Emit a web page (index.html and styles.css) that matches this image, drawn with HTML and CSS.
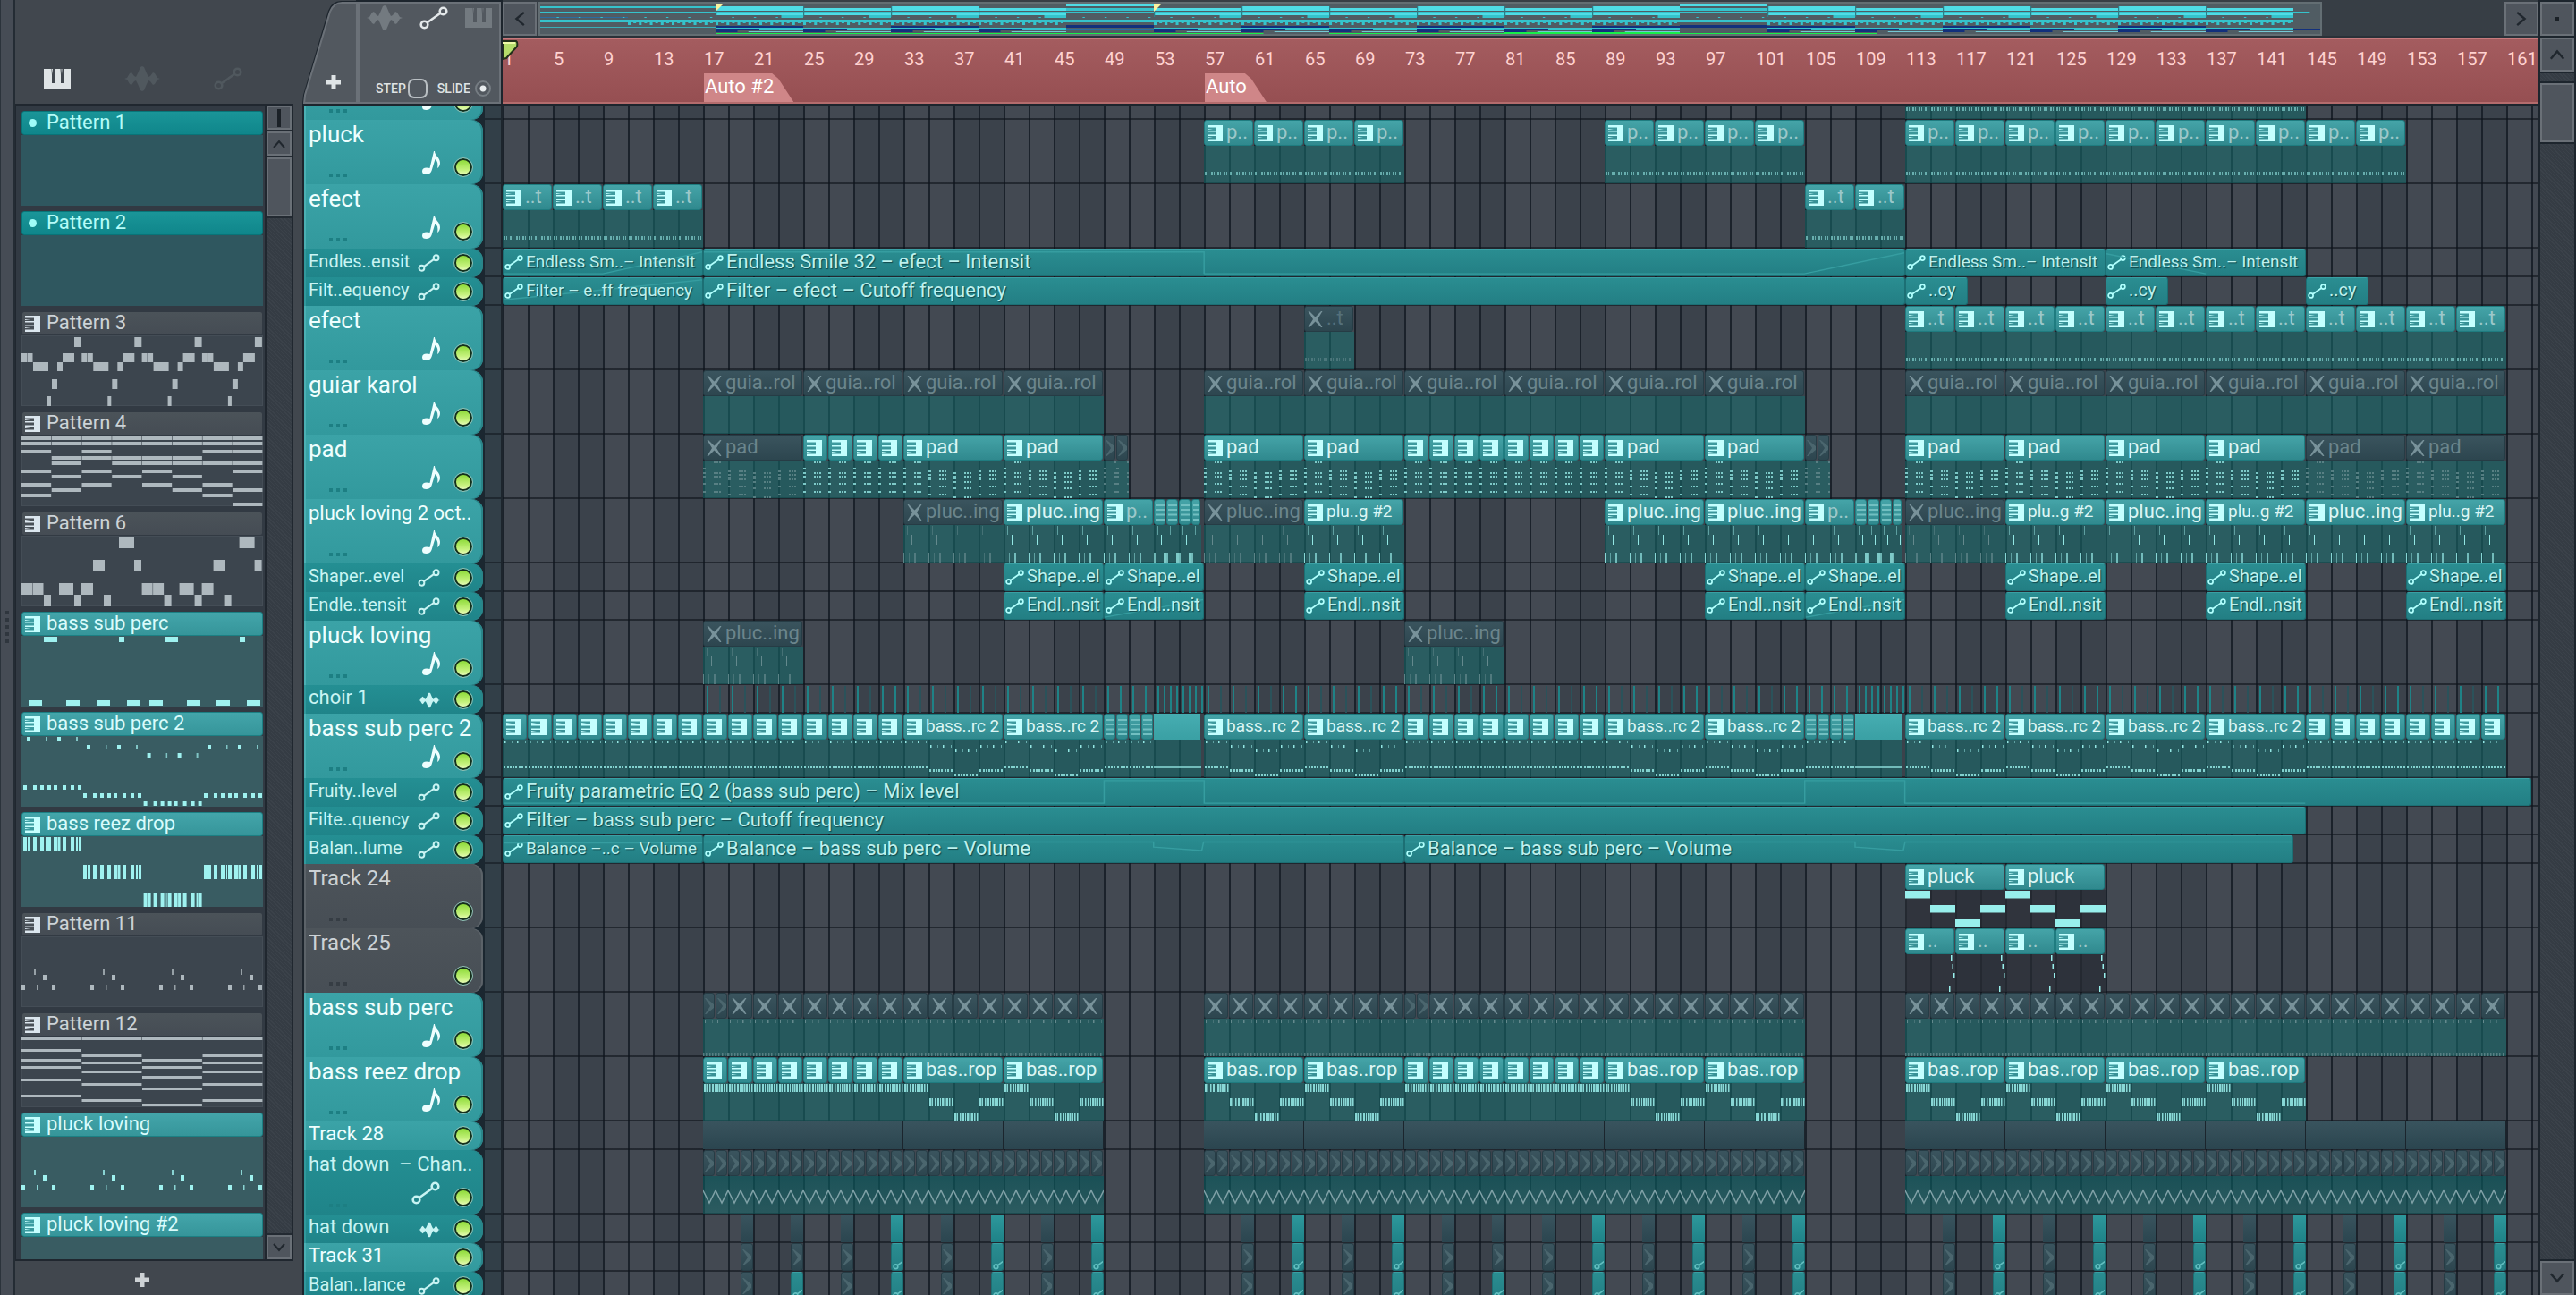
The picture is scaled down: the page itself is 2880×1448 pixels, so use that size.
FILE: index.html
```html
<!DOCTYPE html>
<html lang="en">
<head>
<meta charset="utf-8">
<title>Playlist</title>
<link rel="stylesheet" href="styles.css">
</head>
<body>
<svg class="symbols" aria-hidden="true">
  <symbol id="i-keys" viewBox="0 0 30 22"><path d="M0 0H8.500L9 7V16H13V0H18.500L19 7V16H23V0H30V22H0ZM9 0H10L9.500 6ZM19.500 0H20.500L20 6Z"/></symbol>
  <symbol id="i-pattern" viewBox="0 0 17 18"><path d="M0 0H17V18H0V15.500H10V12H0V10.500H10V7.500H0V6H10V2.500H0ZM0 4L6 5H0ZM0 14L6 13H0Z"/></symbol>
  <symbol id="i-wave" viewBox="0 0 40 28"><path d="M0 14L3 13L6 8L8 7L11 11L13 12L15 8L18 1L20 0L22 1L25 8L27 12L29 11L32 7L34 8L37 13L40 14L37 15L34 20L32 21L29 17L27 16L25 20L22 27L20 28L18 27L15 20L13 16L11 17L8 21L6 20L3 15Z"/></symbol>
  <symbol id="i-auto" viewBox="0 0 32 26"><g fill="none" stroke="currentColor" stroke-width="2.600"><circle cx="5.500" cy="20.500" r="3.800"/><circle cx="26.500" cy="5.500" r="3.800"/><path d="M9 18L23 8"/></g></symbol>
  <symbol id="i-x" viewBox="0 0 16 18"><path d="M0 0H1.500L8 6.500L14.500 0H16L10.500 9L16 18H14.500L8 11.500L1.500 18H0L5.500 9Z"/></symbol>
  <symbol id="i-half" viewBox="0 0 10 18"><path d="M0 0H1.500L10 7V11L1.500 18H0L6 9Z"/></symbol>
  <symbol id="i-lines" viewBox="0 0 10 18"><path d="M0 0H10V2H0ZM0 5H10V7H0ZM0 10.500H10V12.500H0ZM0 16H10V18H0Z"/></symbol>
  <symbol id="i-note" viewBox="0 0 20 26"><path d="M13 0H14C14 5 20 7 20 13Q20 17 17 19Q18.500 12 14.500 9L10.500 22Q9 26 4.500 26Q0 26 0 22.500Q0 18.500 5 18.500Q7 18.500 8.500 19Z"/></symbol>
  <symbol id="i-chev" viewBox="0 0 14 10"><path d="M1 9L7 2L13 9" fill="none" stroke="currentColor" stroke-width="2"/></symbol>
  <symbol id="i-plus" viewBox="0 0 16 16"><path d="M5.500 0H10.500V5.500H16V10.500H10.500V16H5.500V10.500H0V5.500H5.500Z"/></symbol>
</svg>

<div class="handle"><i></i><i></i><i></i><i></i><i></i></div>

<aside class="browser">
  <nav class="tabs" aria-label="Picker">
    <button class="tab tab--on" aria-label="Patterns"><svg width="30" height="22"><use href="#i-keys"/></svg></button>
    <button class="tab" aria-label="Audio clips"><svg width="40" height="28"><use href="#i-wave"/></svg></button>
    <button class="tab" aria-label="Automation clips"><svg width="32" height="26"><use href="#i-auto"/></svg></button>
  </nav>
  <div class="picker">
    <div class="patterns" id="patterns"></div>
    <div class="scroll scroll--thin">
      <button class="sq" aria-label="Options"><span class="tick"></span></button>
      <button class="sq" aria-label="Scroll up"><svg width="14" height="10"><use href="#i-chev"/></svg></button>
      <div class="thumb"></div>
      <div class="rail"></div>
      <button class="sq down" aria-label="Scroll down"><svg width="14" height="10"><use href="#i-chev"/></svg></button>
    </div>
  </div>
  <button class="add" aria-label="Add pattern"><svg width="16" height="16"><use href="#i-plus"/></svg></button>
</aside>

<main class="playlist">
  <header class="top">
    <div class="tools">
      <svg class="slope" viewBox="0 0 60 116" preserveAspectRatio="none" aria-hidden="true"><path d="M0 116L1 106L28 12Q32 1 42 1H60V116Z" fill="#1d252d"/><path d="M2 115L3 106L30 13Q34 3 43 3H59V115Z" fill="#52585f" stroke="#6b7178" stroke-width="2"/></svg>
      <button class="add-track" aria-label="Add track"><svg width="16" height="16"><use href="#i-plus"/></svg></button>
      <div class="modes">
        <div class="mode-icons">
          <svg class="dim" width="40" height="28"><use href="#i-wave"/></svg>
          <svg width="32" height="26"><use href="#i-auto"/></svg>
          <svg class="dim" width="30" height="22"><use href="#i-keys"/></svg>
        </div>
        <div class="snap">
          <label for="step">STEP</label><input type="checkbox" id="step">
          <label for="slide">SLIDE</label><input type="radio" id="slide" checked>
        </div>
      </div>
    </div>
    <div class="time">
      <div class="overview">
        <button class="sq left" aria-label="Scroll left"><svg width="18" height="12"><use href="#i-chev"/></svg></button>
        <div class="map" id="map"></div>
        <button class="sq right" aria-label="Scroll right"><svg width="18" height="12"><use href="#i-chev"/></svg></button>
      </div>
      <div class="ruler">
        <div class="bars" id="bars"></div>
        <svg class="playhead" viewBox="0 0 18 22" aria-hidden="true"><path d="M0 1H15Q17 2 16 7L4 20L0 21Z" fill="#b4dc6a" stroke="#22301a" stroke-width="2"/><path d="M0 3H14" stroke="#eef9a8" stroke-width="2"/></svg>
        <div class="marker" style="left:225px">Auto #2</div>
        <div class="marker" style="left:785px">Auto</div>
      </div>
    </div>
  </header>
  <div class="tracks-view">
    <div class="tracks" id="tracks"></div>
  </div>
</main>

<div class="scroll scroll--wide">
  <button class="sq" aria-label="Menu"><span class="dot"></span></button>
  <button class="sq" aria-label="Scroll up"><svg width="18" height="12"><use href="#i-chev"/></svg></button>
  <div class="rail rail--above"></div>
  <div class="thumb"></div>
  <div class="rail"></div>
  <button class="sq down" aria-label="Scroll down"><svg width="18" height="12"><use href="#i-chev"/></svg></button>
</div>
<script src="app.js"></script>
</body>
</html>
```
FILE: styles.css
```css
* { box-sizing: border-box; }

body {
  margin: 0;
  height: 100vh;
  overflow: hidden;
  display: flex;
  background: #41474e;
  color: #d5dadd;
  font-family: Roboto, sans-serif;
  font-size: 22px;
}

button {
  margin: 0;
  padding: 0;
  border: 0;
  background: none;
  color: inherit;
  font: inherit;
  display: flex;
  align-items: center;
  justify-content: center;
}

svg { display: block; fill: currentColor; flex: none; }
.symbols { position: absolute; width: 0; height: 0; }

/* Left edge grip */
.handle {
  width: 17px;
  flex: none;
  display: flex;
  flex-direction: column;
  justify-content: center;
  align-items: center;
  gap: 4px;
  padding-bottom: 46px;
  background: #464c55;
  border-left: 1px solid #2b333b;
  border-right: 2px solid #242c34;
}
.handle i { width: 4px; height: 4px; background: #2f363e; }

/* Pattern picker */
.browser {
  width: 321px;
  flex: none;
  display: flex;
  flex-direction: column;
}
.tabs {
  height: 116px;
  flex: none;
  padding: 60px 67px 0 32px;
  display: flex;
  align-items: center;
  justify-content: space-between;
  color: #50585e;
}
.tab--on { color: #dfe4e6; }
.picker {
  flex: 1;
  min-height: 0;
  margin-right: 10px;
  display: flex;
  border: solid #20272f;
  border-width: 2px 2px 2px 1px;
}
.patterns {
  flex: 1;
  min-width: 0;
  overflow: hidden;
  padding: 6px 2px 0 6px;
  display: flex;
  flex-direction: column;
  gap: 6px;
  background: #323a43;
  border-right: 2px solid #20272f;
}
.pattern {
  flex: none;
  height: 106px;
  display: flex;
  flex-direction: column;
  align-items: stretch;
  justify-content: flex-start;
  text-align: left;
  color: #ccd3d7;
}
.pattern-name {
  height: 27px;
  flex: none;
  display: flex;
  align-items: center;
  gap: 7px;
  padding-left: 3px;
  line-height: 23px;
  background: linear-gradient(#4b5359, #454c54);
  border: 1px solid #323a43;
  border-radius: 3px;
}
.pattern-name span { padding-bottom: 2px; }
.pattern-name svg { color: #dbe6ee; }
.bullet { width: 17px; display: flex; justify-content: center; }
.bullet::before { content: ""; width: 9px; height: 9px; border-radius: 50%; background: #9ffcf8; }
.pattern-view {
  flex: 1;
  background: #3c454e;
  box-shadow: inset 0 0 0 1px #444d56;
  color: #aeb8be;
}
.pattern--teal { color: #d9fbfb; }
.pattern--teal .pattern-name { background: linear-gradient(#43a5aa, #36959a); border-color: #1c8084; }
.pattern--teal .pattern-name svg { color: #c6ffff; }
.pattern--teal .pattern-view { background: #395c62; box-shadow: none; color: #9ff2f0; }
.pattern--deep { color: #b5fbf8; }
.pattern--deep .pattern-name { background: linear-gradient(#1a9598, #0f868b); border-color: #087478; }
.pattern--deep .pattern-view { background: #2f575f; box-shadow: none; }
.add { height: 38px; flex: none; margin-right: 38px; padding-top: 4px; color: #cdd2d5; }

/* Scroll bars and square buttons */
.sq {
  flex: none;
  width: 38px;
  height: 38px;
  background: #4f555d;
  border: 2px solid #6a7077;
  color: #20272e;
}
.scroll { display: flex; flex-direction: column; gap: 2px; background: #232a32; flex: none; }
.scroll--thin { width: 28px; }
.scroll--thin .sq { width: 28px; height: 27px; }
.scroll--wide { width: 42px; padding: 2px 2px 0; background: #1d252d; }
.thumb { height: 66px; flex: none; background: #4f555d; border: 2px solid #6a7077; }
.rail {
  flex: 1;
  background: repeating-linear-gradient(45deg, #3b424a 0 1px, #353c44 1px 3px);
}
.rail--above { flex: none; height: 9px; }
.tick { width: 4px; height: 20px; background: #1b2127; }
.dot { width: 4px; height: 4px; background: #1b2127; }
.down svg { transform: rotate(180deg); }
.left svg { transform: rotate(-90deg); }
.right svg { transform: rotate(90deg); }

/* Playlist header */
.playlist { flex: 1; min-width: 0; display: flex; flex-direction: column; }
.top { height: 118px; flex: none; display: flex; border-bottom: 2px solid #1d252d; }
.tools { width: 224px; flex: none; position: relative; display: flex; padding-top: 2px; border-right: 2px solid #1d252d; }
.slope { position: absolute; left: 0; top: 0; width: 62px; height: 116px; }
.add-track { width: 62px; flex: none; padding: 66px 0 0 8px; position: relative; color: #dfe4e6; }
.modes {
  flex: 1;
  display: flex;
  flex-direction: column;
  justify-content: space-between;
  background: #52585f;
  border: 2px solid #6b7178;
  outline: 2px solid #1d252d;
  padding: 2px 8px 4px 8px;
}
.mode-icons { display: flex; align-items: center; justify-content: space-between; color: #e4e8ea; }
.dim { color: #737a80; }
.snap { display: flex; align-items: center; font-size: 14px; font-weight: 500; color: #dfe3e5; padding-left: 10px; }
.snap input { appearance: none; margin: 0 11px 0 2px; width: 22px; height: 22px; border: 2px solid #b9bfc3; border-radius: 7px; }
.snap #slide { margin: 0 0 0 5px; width: 18px; height: 18px; border-radius: 50%; border-color: #767d83; background: radial-gradient(#e8ecee 0 3px, transparent 4px); }

.time { flex: 1; min-width: 0; display: flex; flex-direction: column; }
.overview { height: 42px; flex: none; padding-top: 2px; display: flex; gap: 2px; background: #373e45; border-bottom: 2px solid #2a3138; }
.map { width: 1994px; flex: 0 1 auto; min-width: 0; background: #505c63; border: 2px solid #636e73; }
.map svg { width: 100%; height: 100%; }
.right { margin-left: auto; }
.ruler {
  flex: 1;
  position: relative;
  overflow: hidden;
  background: linear-gradient(#a45c5f, #964f52);
  border: solid #c67b7d;
  border-width: 2px 0;
  border-bottom-color: #b46c6d;
}
.bars { display: flex; padding-top: 8px; color: #ffd2d0; font-size: 20px; line-height: 28px; }
.bars span { width: 56px; flex: none; padding-left: 1px; }
.bars span:last-child { width: auto; }
.playhead { position: absolute; left: 0; top: 1px; width: 18px; height: 22px; }
.marker {
  position: absolute;
  bottom: 0;
  height: 32px;
  padding: 0 22px 0 1px;
  line-height: 29px;
  color: #fff;
  background: #cf8688;
  clip-path: polygon(0 0, calc(100% - 24px) 0, calc(100% - 17px) 6px, 100% 100%, 0 100%);
}

/* Tracks */
.tracks-view { flex: 1; min-height: 0; overflow: hidden; }
.tracks { margin-top: -56px; }
.track { height: 72px; display: flex; }
.track--short { height: 32px; }
.cell {
  width: 224px;
  flex: none;
  border-left: 2px solid #1d252d;
  border-right: 2px solid #1d252d;
  background: linear-gradient(#1b2730, #1b2730) 0 0 / 202px 100% no-repeat, linear-gradient(transparent calc(100% - 2px), #1f2830 0), #323f48;
}
.head {
  width: 200px;
  height: 100%;
  position: relative;
  padding: 0 12px 0 3px;
  border-left: 2px solid #4bb0b4;
  border-radius: 0 13px 13px 0;
  box-shadow: inset -2px 0 0 #2a8589;
  background: linear-gradient(#3ba3a7, #32999d);
  color: #eefefe;
  display: flex;
  align-items: flex-end;
  justify-content: flex-end;
  gap: 16px;
}
.head--auto { background: linear-gradient(#248f93, #1f8489); border-color: #31999d; color: #c9f4f3; }
.head--grey { background: linear-gradient(#4d545a, #474e55); border-color: #5c6369; box-shadow: inset -2px 0 0 #5b6268; color: #ccd2d6; }
.name { position: absolute; left: 3px; top: 0; line-height: 32px; font-size: 26px; white-space: nowrap; }
.name--tight { font-size: 22px; }
.head--grey .name { font-size: 24px; }
.track--short .name { font-size: 22px; line-height: 28px; }
.track--short .name--tight { font-size: 20px; }
.dots { position: absolute; left: 26px; bottom: 8px; width: 20px; height: 4px; background: linear-gradient(90deg, #1d7f83 4px, transparent 4px 8px, #1d7f83 8px 12px, transparent 12px 16px, #1d7f83 16px); }
.head--grey .dots { background: linear-gradient(90deg, #363d44 4px, transparent 4px 8px, #363d44 8px 12px, transparent 12px 16px, #363d44 16px); }
.kind { margin-bottom: 11px; }
.track--short .kind { margin-bottom: 6px; }
.led {
  width: 20px;
  height: 20px;
  flex: none;
  margin-bottom: 9px;
  border-radius: 50%;
  border: 2px solid #15301c;
  outline: 1px solid #8fc0b4;
  background: linear-gradient(#8edb3a, #c6f27e 70%, #e6fbb6);
}
.track--short .led { margin-bottom: 6px; }

.lane {
  flex: 1;
  min-width: 0;
  position: relative;
  overflow: hidden;
  background:
    linear-gradient(transparent calc(100% - 2px), rgba(14, 19, 26, .6) 0),
    repeating-linear-gradient(90deg, #1b222b 0 2px, transparent 2px 28px),
    repeating-linear-gradient(90deg, #434952 0 56px, #3b424b 56px 112px);
}

/* Clips sit at their bar on the time line */
.clip { position: absolute; top: 0; bottom: 1px; display: flex; flex-direction: column; overflow: hidden; }
.clip-bar {
  height: 29px;
  flex: none;
  margin-right: 1px;
  padding: 0 0 0 3px;
  display: flex;
  align-items: center;
  gap: 4px;
  overflow: hidden;
  white-space: nowrap;
  line-height: 25px;
  background: linear-gradient(#45a4a8, #30898e);
  border: 1px solid #1f7c80;
  border-radius: 3px;
  color: #dcf6f5;
}
.clip-bar span { padding-bottom: 2px; }
.clip-bar svg { color: #c4ffff; }
.clip-bar .faint { color: #9cc8ca; }
.clip-bar .narrow { font-size: 19px; }
.clip-notes { flex: 1; background: rgba(22, 109, 110, .55); color: #93e6e3; }
.clip-notes svg { width: 100%; height: 100%; }
.clip--mini .clip-bar { padding-left: 1px; }
.clip--mini .clip-bar svg { color: #71bfc1; }
.clip--plain .clip-bar { border: 0; border-radius: 0; background: linear-gradient(#46adb1, #3aa0a4); }
.clip--muted .clip-bar { background: linear-gradient(#3a545e, #2d464f); border-color: #263c45; color: #6b858c; }
.clip--muted .clip-bar svg { color: #78929a; }
.clip--muted .clip-bar .faint { color: #55707a; }
.clip--muted .clip-notes { color: #64898d; }
.clip--muted.clip--mini .clip-bar svg { color: #4b666e; }
.clip--dark .clip-notes { background: rgba(40, 44, 52, .7); color: #98efec; }
.clip--wave .clip-notes { background: linear-gradient(rgba(8, 88, 92, .65), rgba(22, 109, 110, .5)); color: #7fa0a6; }

.auto {
  position: absolute;
  top: 0;
  height: 31px;
  padding-left: 1px;
  display: flex;
  align-items: center;
  gap: 3px;
  overflow: hidden;
  white-space: nowrap;
  line-height: 27px;
  background: linear-gradient(#2a8d91, #237f84);
  border: 1px solid #1c6f74;
  border-top-color: #3aa0a4;
  border-radius: 3px;
  color: #bdf1ee;
  text-shadow: 1px 1px 1px #12484c;
}
.auto > svg { color: #b0fffd; }
.auto .curve { position: absolute; left: 0; top: 0; width: 100%; height: 100%; color: #369da0; }
.auto span { position: relative; padding-bottom: 2px; }
.auto--brief { font-size: 20px; }
.auto--tight { font-size: 19px; }
.auto--small { padding: 12px 0 0 1px; }
.auto--small > svg { color: #62bfc0; }
.auto--muted { background: linear-gradient(#3a545e, #2d464f); border-color: #263c45; padding-top: 0; }
.auto--muted > svg { color: #4b666e; }

.block { position: absolute; top: 0; height: 31px; background: linear-gradient(#2e989c, #1e8287); }
.block--muted { background: linear-gradient(#39545e, #2b454f); }
.block--bed { border-right: 1px solid #1b252d; }
.hit { position: absolute; top: 1px; height: 30px; width: 2px; background: #1f8286; }
.hit--soft { background: #2b525a; }
```
FILE: app.js
```js
const BAR = 14;
const use = (id, w, h, cls = '') => `<svg class="${cls}" width="${w}" height="${h}" aria-hidden="true"><use href="#${id}"/></svg>`;
const rect = (x, y, w, h, o = 1) => `<rect x="${x}" y="${y}" width="${w}" height="${h}"${o < 1 ? ` opacity="${o}"` : ''}/>`;

/* ---------- pattern thumbnails, 270 x 79 ---------- */
const spread = (n, step, fn) => Array.from({ length: n }, (_, i) => fn(i * step, i)).join('');
const grid = (cols, rows, h) => rows.map(([y, list]) => list.map(c => rect(c * 270 / cols, y, 270 / cols - 0.6, h)).join('')).join('');
const dotsView = spread(4, 77, x => rect(x + 14, 37, 2, 6, .8) + rect(x + 24, 43, 4, 6) + rect(x, 54, 4, 6) + rect(x + 17, 54, 1.5, 6, .8) + rect(x + 34, 54, 4, 6));
const all8 = [0, 1, 2, 3, 4, 5, 6, 7];
const views = {
  p3: spread(4, 67.3, x => rect(x + 59, 2, 8, 11) + rect(x, 20, 6, 10) + rect(x + 6.5, 20, 6, 10) + rect(x + 46, 20, 13, 10) + rect(x + 13, 30, 17, 10) + rect(x + 40, 30, 6, 10) + rect(x + 34, 49, 6, 11) + rect(x + 29, 68, 4, 11)),
  p4: grid(8, [[1, all8], [7, all8], [16, [0, 2, 6, 7]], [23, [1, 2, 3, 4, 5]], [29, [1, 3, 4, 5, 6, 7]], [38, [0, 2, 4, 7]], [44, [1, 3, 5]], [53, [0, 2, 4, 6]], [59, [1, 5, 7]], [65, [0, 6]], [75, [7]]], 4),
  p6: spread(2, 134.6, x => rect(x + 109, 1, 17, 13) + rect(x + 80, 27, 13, 13) + rect(x + 126, 27, 8, 13) + rect(x, 53, 12, 13) + rect(x + 12.5, 53, 12, 13) + rect(x + 42, 53, 16, 13) + rect(x + 67, 53, 13, 13) + rect(x + 25, 66, 8, 13) + rect(x + 59, 66, 8, 13) + rect(x + 92, 66, 8, 13)),
  sub: [[25, 15], [109, 6], [160, 15], [244, 6]].map(([x, w]) => rect(x, 1, w, 6)).join('') + [8, 50, 84, 118, 143, 185, 218, 252].map(x => rect(x, 72, 15, 6)).join(''),
  sub2: [[0, 1, 55], [67, 10, 64], [134.6, 19, 73], [202, 10, 64]].map(([x, a, b]) => rect(x + 6, a, 4, 5) + rect(x + 27, a, 1.5, 5, .7) + rect(x + 40, a, 4, 5) + rect(x + 61, a, 2, 5, .7) + [2, 13, 21, 29, 36, 46, 55, 63].map(d => rect(x + d, b, 4, 5)).join('')).join(''),
  reez: [[0, 1], [67, 32], [134.6, 63], [202, 32]].map(([x, y]) => [[2, 4], [7, 3], [13, 4], [21, 4], [27, 1], [29, 4], [36, 4], [40.5, 3], [46, 4], [55, 4], [61, 2], [64, 3]].map(([d, w]) => rect(x + d, y, w, 16)).join('')).join(''),
  p11: dotsView,
  p12: grid(4, [[1, [0, 1, 2, 3]], [14, [0]], [20, [1, 3]], [25, [0, 2]], [28, [1, 3]], [33, [0, 2]], [38, [1, 3]], [44, [2]], [47, [0]], [52, [1, 3]], [57, [2]], [65, [0]], [70, [1, 3]], [75, [2]]], 3),
};
const patterns = [
  ['Pattern 1', 'deep', ''], ['Pattern 2', 'deep', ''], ['Pattern 3', '', 'p3'], ['Pattern 4', '', 'p4'], ['Pattern 6', '', 'p6'],
  ['bass sub perc', 'teal', 'sub'], ['bass sub perc 2', 'teal', 'sub2'], ['bass reez drop', 'teal', 'reez'],
  ['Pattern 11', '', 'p11'], ['Pattern 12', '', 'p12'], ['pluck loving', 'teal', 'p11'], ['pluck loving #2', 'teal', ''],
];
document.getElementById('patterns').innerHTML = patterns.map(([name, tone, view]) =>
  `<button class="pattern ${tone && 'pattern--' + tone}"><span class="pattern-name">${tone === 'deep' ? '<i class="bullet"></i>' : use('i-pattern', 17, 18)}<span>${name}</span></span>` +
  `<svg class="pattern-view" viewBox="0 0 270 79" preserveAspectRatio="none" width="100%">${views[view] || ''}</svg></button>`).join('');

/* ---------- notes inside clips, 42 high ---------- */
const steps = (w, step, fn) => { let s = ''; for (let x = 0, i = 0; x < w; x += step, i++) s += fn(x, i); return s; };
const ABCB = i => [0, 1, 2, 1][i % 4];
const notes = {
  none: () => '',
  ticks: w => steps(w, 7, x => rect(x + 1, 29, 2, 4, .6) + rect(x + 4, 29, 1, 4, .6)),
  pad: w => steps(w, 28, (x, i) => {
    const ys = [[1, 13, 17, 25, 34], [11, 15, 20, 28, 37], [13, 17, 23, 30, 40]][ABCB(i)];
    return ys.map((y, k) => (k || ABCB(i) ? rect(x, y, 3, 2, .8) : '') + rect(x + 12, y, 2, 2, .8) + rect(x + 15, y, 2, 2, .8) + rect(x + 18, y, 2, 2, .8)).join('') + rect(x, ys[0] + 7, 3, 1, .8);
  }),
  loving: w => steps(w, 28, x => rect(x + 4, 1, 1, 10, .5) + rect(x + 9, 11, 1, 11) + rect(x, 31, 1, 11, .9) + rect(x + 6, 31, 1, 11, .5) + rect(x + 12, 31, 2, 11, .7)),
  lovingMini: () => rect(4, 1, 1, 10, .5) + rect(8, 11, 1, 11) + rect(0, 31, 2, 11, .7) + rect(11, 31, 3, 11, .8),
  sub2: w => steps(w, 28, (x, i) => {
    const k = ABCB(i), a = [1, 6, 11][k], b = [29, 33, 38][k];
    return rect(x + 2, a, 1.5, 3) + rect(x + 10, a, 1, 3, .5) + rect(x + 16, a, 1.5, 3) + rect(x + 25, a, 1, 3, .6) + [1, 5, 8, 11, 14, 18, 21, 25].map(d => rect(x + d, b, 2, 3, .85)).join('');
  }),
  line: w => rect(0, 29, w, 3, .7),
  sub: w => steps(w, 28, x => rect(x + 2, 1, 1, 4) + rect(x + 10, 1, 1, 4, .5) + rect(x + 16, 1, 1.5, 4) + rect(x + 25, 1, 1, 4, .5) + [0, 3, 7, 10, 13, 17, 20, 24].map(d => rect(x + d, 38, 1.5, 4, .8)).join('')),
  reez: w => steps(w, 28, (x, i) => [[1, 2], [3.5, 1.5], [7, 1.5], [10, 2], [13, 1], [15, 2], [17.5, 2], [20, 2], [23, 1.5], [26, 1.5]].map(([d, n]) => rect(x + d, [1, 17, 33][ABCB(i)], n, 9, .9)).join('')),
  stairs: w => steps(w, 28, (x, i) => rect(x, [1, 17, 33][ABCB(i)], 28, 8.5)),
  drops: () => rect(51, 1, 1.5, 6) + rect(52.5, 11, 1.5, 6) + rect(54, 21, 1.5, 6) + rect(49, 36, 1.5, 6),
  zig: w => `<path d="M0 16${steps(w, 14, x => `L${x + 7} 30L${x + 14} 16`)}" fill="none" stroke="currentColor" stroke-width="1.500"/>`,
};

const labelClass = label => (/^(p?\.\.t?)$/.test(label) ? 'faint' : /2$/.test(label) ? 'narrow' : '');

/* one clip: from bar, to bar, label, kind of notes, modifiers */
function clip(from, to, label, kind, mod = '') {
  const w = (to - from) * BAR, mini = to - from <= 1, muted = mod.includes('muted');
  const icon = mod.includes('plain') ? '' : mini ? use(muted ? 'i-half' : 'i-lines', 10, 18) : use(muted ? 'i-x' : 'i-pattern', 17, 18);
  const cls = ['clip', mini && 'clip--mini', ...mod.split(' ').filter(Boolean).map(m => 'clip--' + m)].filter(Boolean).join(' ');
  const text = label ? `<span class="${labelClass(label)}">${label}</span>` : '';
  return `<div class="${cls}" style="left:${(from - 1) * BAR}px;width:${w}px"><div class="clip-bar">${icon}${text}</div>` +
    `<div class="clip-notes"><svg viewBox="0 0 ${w} 42" preserveAspectRatio="none">${notes[kind](w)}</svg></div></div>`;
}
function run(from, to, size, label, kind, mod) {
  let s = '';
  for (let b = from; b < to; b += size) s += clip(b, b + size, label, kind, mod);
  return s;
}
function auto(from, to, label, curve = '') {
  const w = (to - from) * BAR;
  const fit = to - from === 16 ? 'auto--tight' : to - from <= 8 ? 'auto--brief' : '';
  const line = curve ? `<svg class="curve" viewBox="0 0 ${w} 31" preserveAspectRatio="none"><path d="${curve}" fill="none" stroke="currentColor" stroke-width="1.500"/></svg>` : '';
  return `<div class="auto ${fit}" style="left:${(from - 1) * BAR}px;width:${w}px">${line}${use('i-auto', 21, 19)}<span>${label}</span></div>`;
}
const block = (from, to, mod) => `<div class="block ${mod}" style="left:${(from - 1) * BAR}px;width:${(to - from) * BAR}px"></div>`;
const small = (bar, on) => `<div class="auto auto--small ${on ? '' : 'auto--muted'}" style="left:${(bar - 1) * BAR}px;width:${BAR}px">${on ? use('i-auto', 20, 17) : use('i-half', 10, 18)}</div>`;

const hats = [];
for (const [a, b] of [[20, 48], [60, 104], [116, 160]]) for (let n = a; n <= b; n += 4) hats.push(n);
const hatOn = n => n % 8 === 0 && n !== 24 && n !== 80;

function choir() {
  let s = '';
  const hit = (x, soft) => { s += `<div class="hit ${soft ? 'hit--soft' : ''}" style="left:${x}px"></div>`; };
  for (let b = 17; b < 161; b += 2) {
    const x = (b - 1) * BAR, n = (b - 17) / 2;
    const fill = (b >= 49 && b < 57) || (b >= 105 && b < 113);
    if (!fill) { hit(x + 4); hit(x + 18, !(b === 31 || (b > 56 && n % 4 === 3))); continue; }
    const dense = (b - 49) % 56 >= 4;
    (dense ? [4, 11, 18, 25] : [4, 18]).forEach(d => hit(x + d));
  }
  return s;
}

const shapes = label => [41, 49, 65, 97, 105, 121, 137, 153].map(b => auto(b, b + 8, label, b === 49 || b === 105 ? (label[0] === 'E' ? 'M0 29L112 8' : '') : '')).join('');
const VOL = 'Balance – bass sub perc – Volume';
const SM = 'Endless Sm..– Intensit';

/* name, size, head tone, icon, lane */
const tracks = [
  ['', 'tall', '', 'note', run(113, 145, 4, '', 'ticks')],
  ['pluck', 'tall', '', 'note', run(57, 73, 4, 'p..', 'ticks') + run(89, 105, 4, 'p..', 'ticks') + run(113, 153, 4, 'p..', 'ticks')],
  ['efect', 'tall', '', 'note', run(1, 17, 4, '..t', 'ticks') + run(105, 113, 4, '..t', 'ticks')],
  ['Endles..ensit', 'short', 'auto tight', 'auto', auto(1, 17, SM, 'M0 29H112L224 3') + auto(17, 113, 'Endless Smile 32 – efect – Intensit', 'M0 3H560V29V3M560 29H1232L1344 4') + auto(113, 129, SM) + auto(129, 145, SM, 'M0 5L112 29')],
  ['Filt..equency', 'short', 'auto tight', 'auto', auto(1, 17, 'Filter – e..ff frequency', 'M0 26L224 2') + auto(17, 113, 'Filter – efect – Cutoff frequency') + auto(113, 118, '..cy') + auto(129, 134, '..cy') + auto(145, 150, '..cy')],
  ['efect', 'tall', '', 'note', clip(65, 69, '..t', 'ticks', 'muted') + run(113, 161, 4, '..t', 'ticks')],
  ['guiar karol', 'tall', '', 'note', run(17, 49, 8, 'guia..rol', 'none', 'muted') + run(57, 105, 8, 'guia..rol', 'none', 'muted') + run(113, 161, 8, 'guia..rol', 'none', 'muted')],
  ['pad', 'tall', '', 'note', clip(17, 25, 'pad', 'pad', 'muted') + run(25, 33, 2, '', 'pad') + run(33, 49, 8, 'pad', 'pad') + run(49, 51, 1, '', 'pad', 'muted') + run(57, 73, 8, 'pad', 'pad') + run(73, 89, 2, '', 'pad') + run(89, 105, 8, 'pad', 'pad') + run(105, 107, 1, '', 'pad', 'muted') + run(113, 145, 8, 'pad', 'pad') + run(145, 161, 8, 'pad', 'pad', 'muted')],
  ['pluck loving 2 oct..', 'tall', 'tight', 'note', [33, 57, 113].map(b => clip(b, b + 8, 'pluc..ing', 'loving', 'muted')).join('') + [41, 89, 97, 129, 145].map(b => clip(b, b + 8, 'pluc..ing', 'loving')).join('') + [65, 121, 137, 153].map(b => clip(b, b + 8, 'plu..g #2', 'loving')).join('') + [49, 105].map(b => clip(b, b + 4, 'p..', 'loving') + run(b + 4, b + 7, 1, '', 'lovingMini') + clip(b + 7, b + 7.75, '', 'lovingMini')).join('')],
  ['Shaper..evel', 'short', 'auto tight', 'auto', shapes('Shape..el')],
  ['Endle..tensit', 'short', 'auto tight', 'auto', shapes('Endl..nsit')],
  ['pluck loving', 'tall', '', 'note', clip(17, 25, 'pluc..ing', 'loving', 'muted') + clip(73, 81, 'pluc..ing', 'loving', 'muted')],
  ['choir 1', 'short', 'auto', 'wave', choir()],
  ['bass sub perc 2', 'tall', '', 'note', run(1, 33, 2, '', 'sub2') + run(33, 49, 8, 'bass..rc 2', 'sub2') + [49, 105].map(b => run(b, b + 4, 1, '', 'sub2') + clip(b + 4, b + 7.8, '', 'line', 'plain')).join('') + run(57, 73, 8, 'bass..rc 2', 'sub2') + run(73, 89, 2, '', 'sub2') + run(89, 105, 8, 'bass..rc 2', 'sub2') + run(113, 145, 8, 'bass..rc 2', 'sub2') + run(145, 161, 2, '', 'sub2')],
  ['Fruity..level', 'short', 'auto tight', 'auto', auto(1, 163, 'Fruity parametric EQ 2 (bass sub perc) – Mix level', 'M0 29H672V2H784V29H1456V2H1568V29H2016')],
  ['Filte..quency', 'short', 'auto tight', 'auto', auto(1, 145, 'Filter – bass sub perc – Cutoff frequency')],
  ['Balan..lume', 'short', 'auto tight', 'auto', auto(1, 17, 'Balance –..c – Volume', 'M0 8H224') + auto(17, 73, VOL, 'M0 7H504V13L558 17L560 7H784') + auto(73, 144, VOL, 'M0 7H504V13L558 17L560 7H994')],
  ['Track 24', 'tall', 'grey', '', run(113, 129, 8, 'pluck', 'stairs', 'dark')],
  ['Track 25', 'tall', 'grey', '', run(113, 129, 4, '..', 'drops', 'dark')],
  ['bass sub perc', 'tall', '', 'note', run(17, 19, 1, '', 'sub', 'muted') + run(19, 49, 2, '', 'sub', 'muted') + run(57, 73, 2, '', 'sub', 'muted') + run(73, 75, 1, '', 'sub', 'muted') + run(75, 105, 2, '', 'sub', 'muted') + run(113, 161, 2, '', 'sub', 'muted')],
  ['bass reez drop', 'tall', '', 'note', run(17, 33, 2, '', 'reez') + run(33, 49, 8, 'bas..rop', 'reez') + run(57, 73, 8, 'bas..rop', 'reez') + run(73, 89, 2, '', 'reez') + run(89, 105, 8, 'bas..rop', 'reez') + run(113, 145, 8, 'bas..rop', 'reez')],
  ['Track 28', 'short', '', '', [[17, 33], [33, 41], [41, 49], [57, 65], [65, 73], [73, 89], [89, 97], [97, 105], [113, 121], [121, 129], [129, 137], [137, 145], [145, 153], [153, 161]].map(([a, b]) => block(a, b, 'block--muted block--bed')).join('')],
  ['hat down&nbsp; – Chan..', 'tall', 'auto tight', 'auto', run(17, 49, 1, '', 'zig', 'muted wave') + run(57, 105, 1, '', 'zig', 'muted wave') + run(113, 161, 1, '', 'zig', 'muted wave')],
  ['hat down', 'short', 'auto', 'wave', hats.map(n => block(n, n + 1, hatOn(n) ? '' : 'block--muted')).join('')],
  ['Track 31', 'short', '', '', hats.map(n => small(n, hatOn(n))).join('')],
  ['Balan..lance', 'short', 'auto tight', 'auto', hats.map(n => small(n, n % 8 === 0)).join('')],
];
const kinds = {
  note: () => use('i-note', 20, 26, 'kind'),
  auto: short => short ? use('i-auto', 25, 20, 'kind') : use('i-auto', 32, 26, 'kind'),
  wave: () => use('i-wave', 24, 18, 'kind'),
};
document.getElementById('tracks').innerHTML = tracks.map(([name, size, tone, icon, lane]) => {
  const short = size === 'short', tones = tone.split(' ');
  const head = tones.filter(t => t && t !== 'tight').map(t => 'head--' + t).join(' ');
  return `<section class="track track--${size}"><div class="cell"><div class="head ${head}">` +
    `<span class="name ${tones.includes('tight') ? 'name--tight' : ''}">${name}</span>${short ? '' : '<i class="dots"></i>'}` +
    `${icon ? kinds[icon](short) : ''}<button class="led" aria-label="Mute track"></button></div></div><div class="lane">${lane}</div></section>`;
}).join('');

/* ---------- ruler ---------- */
document.getElementById('bars').innerHTML = Array.from({ length: 41 }, (_, i) => `<span>${i * 4 + 1}</span>`).join('');

/* ---------- song overview, 160 bars at 12.25 ---------- */
(function () {
  const B = 12.25, C = '#35c3cc', L = '#4fdce6', N = '#12307c', G = '#18f04a';
  let s = '';
  const r = (from, to, y, h, fill, o = 1) => { s += `<rect x="${from * B}" y="${y}" width="${(to - from) * B}" height="${h}" fill="${fill}" opacity="${o}"/>`; };
  r(0, 162.5, 0, 1, '#6bb5b8');
  r(0, 16, 3, 2, C); r(0, 16, 9, 2, C); r(0, 161.5, 9, 1, C); r(0, 8, 15, 1, '#2a6da0');
  r(0, 16, 26, 1, C, .8);
  for (const [a, b] of [[16, 48], [56, 104], [112, 160]]) {
    r(a, b, 5, 3, L); r(a, b, 9, 1, C); r(a, b, 11, 2, L); r(a, b, 27, 1, C);
    for (let n = a; n < b; n += 8) {
      r(n + 6, n + 8, 13, 3, C); r(n + 4, n + 8, 27, 2, C); r(n, n + 4, 28, 2, N); r(n, n + 2, 30, 2, N); r(n + 3, n + 8, 31, 1, '#74c8d4');
      if (n % 16 === 0) r(n, n + 8, 3, 2, L);
      if (n % 16 === 0) r(n, n + 8, 25, 2, N);
      r(n, n + 0.1, 3, 12, '#2e7d86');
    }
  }
  r(48, 56, 1, 2, L); r(104, 112, 1, 2, L); r(48, 56, 5, 3, C); r(104, 112, 5, 3, C);
  r(48, 56, 24, 3, N); r(104, 112, 24, 3, N); r(48, 56, 28, 1, '#2a6da0');
  r(0, 160, 18, 3, C);
  for (let n = 8; n < 160; n += .5) if (!((n >= 48 && n < 56) || (n >= 104 && n < 112))) r(n, n + .25, 21, n % 1 ? 1 : 3, C);
  for (let n = 0; n < 160; n += 2) r(n + 1.5, n + 1.7, 15, 1, C);
  r(16, 56, 33, 1, G); r(32, 48, 33, 1, G); r(48, 66, 33, 1, G); r(72, 104, 33, 1, G); r(88, 104, 32, 2, G); r(104, 114, 33, 1, G); r(112, 122, 33, 1, G);
  r(160, 162.5, 28, 1, N);
  for (const m of [16, 56]) s += `<path d="M${m * B} 0h9l-9 9z" fill="#fbf3a0"/>`;
  document.getElementById('map').innerHTML = `<svg viewBox="0 0 1990 34" preserveAspectRatio="none">${s}</svg>`;
})();
```
